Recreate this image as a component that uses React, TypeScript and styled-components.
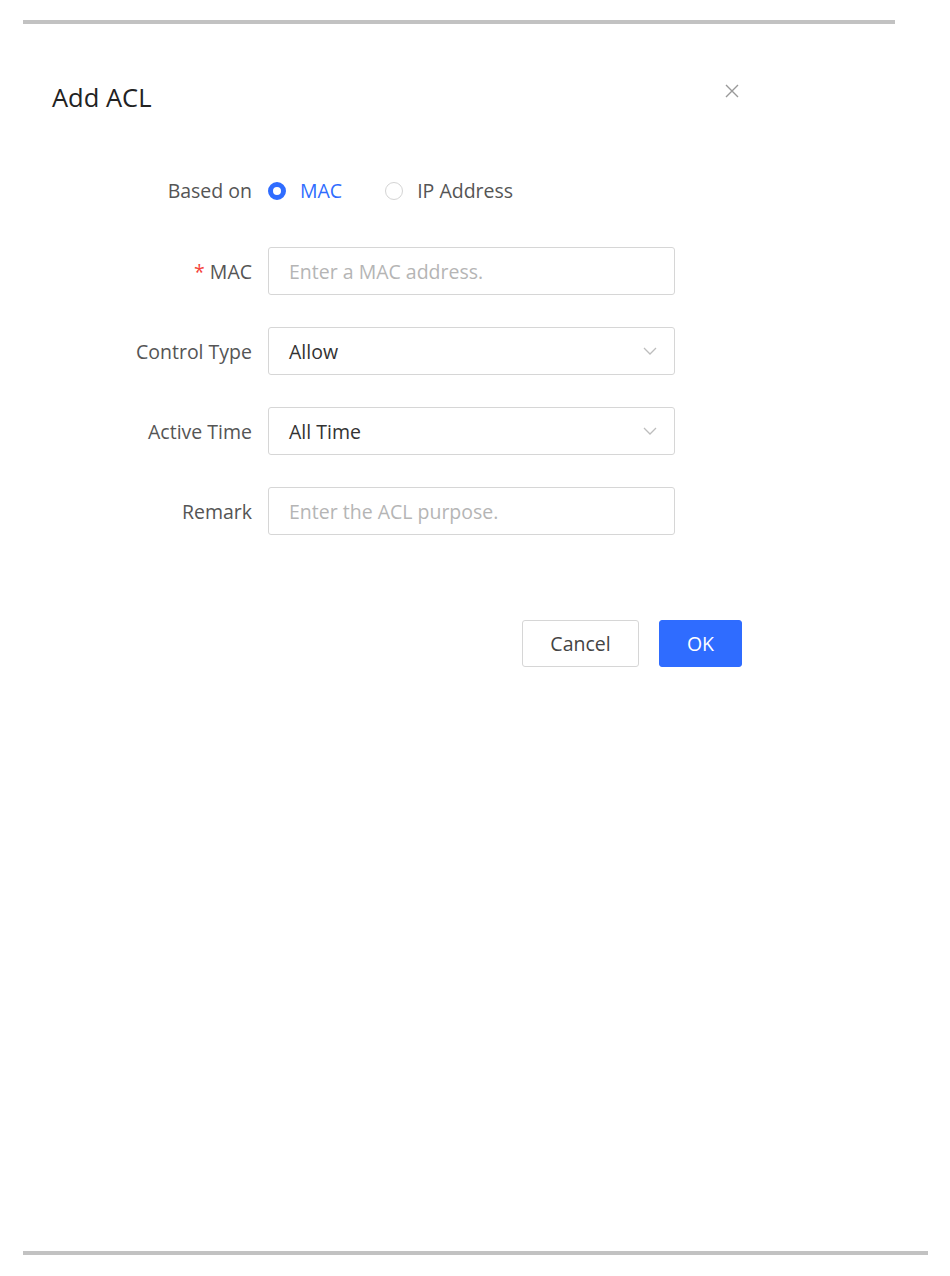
import React from "react";
import styled, { createGlobalStyle } from "styled-components";

const Global = createGlobalStyle`
  html, body { margin: 0; padding: 0; background: #fff; }
  body { font-family: "Open Sans", "Liberation Sans", sans-serif; }
  * { box-sizing: border-box; }
`;

const Page = styled.div`
  width: 950px;
  height: 1276px;
  display: flex;
  flex-direction: column;
  padding: 20px 0 21px 23px;
`;

const Rule = styled.div<{ $w: number }>`
  width: ${(p) => p.$w}px;
  height: 4px;
  background: #c2c2c2;
  flex-shrink: 0;
`;

const Dialog = styled.div`
  width: 760px;
  padding: 53px 0 0 29px;
  display: flex;
  flex-direction: column;
  flex: 1;
`;

const Header = styled.div`
  display: flex;
  justify-content: space-between;
  align-items: center;
  width: 688px;
  height: 40px;
`;

const Title = styled.h1`
  margin: 0;
  font-size: 25.5px;
  font-weight: 400;
  color: #222;
`;

const Close = styled.button`
  border: 0;
  background: none;
  padding: 0;
  width: 16px;
  height: 16px;
  display: flex;
  margin-top: -12px;
  cursor: pointer;
`;

const Form = styled.div`
  display: flex;
  flex-direction: column;
  gap: 32px;
  margin-top: 60px;
`;

const Row = styled.div<{ $compact?: boolean }>`
  display: grid;
  grid-template-columns: 200px 407px;
  column-gap: 16px;
  align-items: center;
  min-height: ${(p) => (p.$compact ? "24px" : "48px")};
  margin-bottom: ${(p) => (p.$compact ? "11px" : "0")};
`;

const Label = styled.label`
  text-align: right;
  font-size: 19.5px;
  color: #555;
`;

const Star = styled.span`
  color: #f5443c;
  margin-right: 5px;
`;

const Radios = styled.div`
  display: flex;
  gap: 43px;
  align-items: center;
`;

const Radio = styled.div<{ $on?: boolean }>`
  display: flex;
  align-items: center;
  gap: 14px;
  font-size: 19.5px;
  color: ${(p) => (p.$on ? "#2f6cff" : "#555")};
`;

const Dot = styled.span<{ $on?: boolean }>`
  width: 18px;
  height: 18px;
  border-radius: 50%;
  border: ${(p) => (p.$on ? "5.5px solid #2f6cff" : "1px solid #d4d4d4")};
  background: #fff;
  display: inline-block;
`;

const Field = styled.div`
  height: 48px;
  border: 1px solid #d6d6d6;
  border-radius: 3px;
  display: flex;
  align-items: center;
  justify-content: space-between;
  padding: 0 16px 0 20px;
  font-size: 19.5px;
  color: #333;
`;

const Placeholder = styled.span`
  color: #b5b5b5;
`;

const Footer = styled.div`
  display: flex;
  justify-content: flex-end;
  gap: 20px;
  width: 690px;
  margin-top: 85px;
`;

const Button = styled.button<{ $primary?: boolean }>`
  height: 47px;
  padding: 0;
  width: ${(p) => (p.$primary ? "83px" : "117px")};
  border-radius: 3px;
  font-family: inherit;
  font-size: 19.5px;
  border: 1px solid ${(p) => (p.$primary ? "#2f6cff" : "#d6d6d6")};
  background: ${(p) => (p.$primary ? "#2f6cff" : "#fff")};
  color: ${(p) => (p.$primary ? "#fff" : "#444")};
`;

const Spacer = styled.div`
  flex: 1;
`;

const Chevron = () => (
  <svg width="16" height="10" viewBox="0 0 16 10">
    <path d="M2 2l6 6 6-6" fill="none" stroke="#bdbdbd" strokeWidth="1.3" />
  </svg>
);

export default function App() {
  return (
    <Page>
      <Global />
      <Rule $w={872} />
      <Dialog>
        <Header>
          <Title>Add ACL</Title>
          <Close aria-label="close">
            <svg width="16" height="16" viewBox="0 0 16 16">
              <path d="M2 2l12 12M14 2L2 14" stroke="#999" strokeWidth="1.4" />
            </svg>
          </Close>
        </Header>
        <Form>
          <Row $compact>
            <Label>Based on</Label>
            <Radios>
              <Radio $on>
                <Dot $on />
                MAC
              </Radio>
              <Radio>
                <Dot />
                IP Address
              </Radio>
            </Radios>
          </Row>
          <Row>
            <Label>
              <Star>*</Star>MAC
            </Label>
            <Field>
              <Placeholder>Enter a MAC address.</Placeholder>
            </Field>
          </Row>
          <Row>
            <Label>Control Type</Label>
            <Field>
              Allow
              <Chevron />
            </Field>
          </Row>
          <Row>
            <Label>Active Time</Label>
            <Field>
              All Time
              <Chevron />
            </Field>
          </Row>
          <Row>
            <Label>Remark</Label>
            <Field>
              <Placeholder>Enter the ACL purpose.</Placeholder>
            </Field>
          </Row>
        </Form>
        <Footer>
          <Button>Cancel</Button>
          <Button $primary>OK</Button>
        </Footer>
        <Spacer />
      </Dialog>
      <Rule $w={905} />
    </Page>
  );
}
